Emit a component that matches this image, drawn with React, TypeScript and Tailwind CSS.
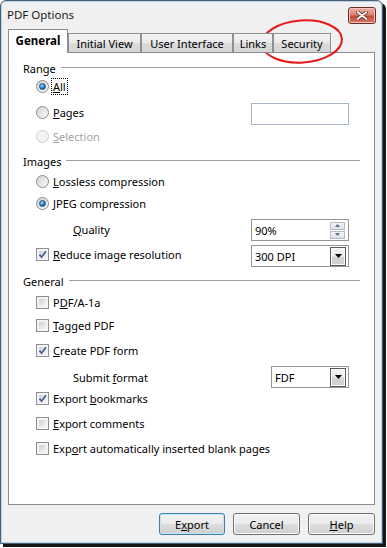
import type { ReactNode } from "react";

const FONT = "font-['Noto_Sans','Liberation_Sans',sans-serif]";

function Radio({ checked, disabled }: { checked?: boolean; disabled?: boolean }) {
  return (
    <span
      className={`size-[13px] shrink-0 rounded-full border flex items-center justify-center ${
        disabled
          ? "border-[#cfcfcf] bg-[#f3f3f3]"
          : "border-[#8a8b8c] bg-[linear-gradient(135deg,#d0d2d5,#fbfbfb)]"
      }`}
    >
      {checked && (
        <span className="size-[7px] rounded-full border border-[#1c4f7c] bg-[radial-gradient(circle_at_35%_30%,#9fd6f7,#1d79bf_60%,#0d4a80)]" />
      )}
    </span>
  );
}

function Check({ checked }: { checked?: boolean }) {
  return (
    <span className="size-[13px] shrink-0 border border-[#8e8f8f] bg-[#f4f4f4] p-[2px]">
      <span className="size-full flex items-center justify-center bg-[linear-gradient(135deg,#cdd0d5,#f6f6f6)] relative">
        {checked && (
          <svg viewBox="0 0 9 9" className="absolute -left-[1px] -top-[1px] size-[9px] overflow-visible">
            <path d="M1.5 4.6 L3.6 7.2 L8 1.2" fill="none" stroke="#4a5f95" strokeWidth="1.7" />
          </svg>
        )}
      </span>
    </span>
  );
}

function Row({ mt, children }: { mt: string; children: ReactNode }) {
  return <div className={`h-[18px] flex items-center ${mt}`}>{children}</div>;
}

function Section({ mt, label }: { mt: string; label: string }) {
  return (
    <Row mt={mt}>
      <span className="text-black">{label}</span>
      <span className="flex-1 h-px bg-[#a0a0a0] ml-[5px] -mt-[1px]" />
    </Row>
  );
}

function Option({ kind, checked, disabled, children }: { kind: "radio" | "check"; checked?: boolean; disabled?: boolean; children: ReactNode }) {
  return (
    <div className="flex items-center gap-[4px] pl-[13px]">
      {kind === "radio" ? <Radio checked={checked} disabled={disabled} /> : <Check checked={checked} />}
      <span className={disabled ? "text-[#a3a3a3]" : "text-black"}>{children}</span>
    </div>
  );
}

function DropBtn() {
  return (
    <span className="w-[16px] h-[19px] border border-[#5a5a5a] bg-[linear-gradient(#f6f6f6,#e6e6e6_50%,#d4d4d4_51%,#cfcfcf)] flex items-center justify-center shadow-[inset_0_0_0_1px_#fafafa]">
      <svg viewBox="0 0 7 4" className="w-[7px] h-[4px]">
        <path d="M0 0 H7 L3.5 4 Z" fill="#000" />
      </svg>
    </span>
  );
}

function Select({ value, w }: { value: string; w: string }) {
  return (
    <div className={`${w} h-[22px] mr-[11px] ml-auto border border-[#959595] bg-white flex items-center justify-between pl-[3px] pr-[2px]`}>
      <span>{value}</span>
      <DropBtn />
    </div>
  );
}

function Button({ children, def }: { children: ReactNode; def?: boolean }) {
  return (
    <div
      className={`h-[22px] rounded-[3px] border flex items-center justify-center bg-[linear-gradient(#f2f2f2,#ebebeb_48%,#dddddd_52%,#cfcfcf)] ${
        def ? "w-[66px] border-[#3c7fb1] shadow-[inset_0_0_0_1px_#c6e6f8]" : "w-[67px] border-[#707070] shadow-[inset_0_0_0_1px_#fbfbfb]"
      }`}
    >
      {children}
    </div>
  );
}

const TAB = "h-[20px] border border-[#8e8f8f] border-b-[#898c95] bg-[linear-gradient(#f3f3f3,#e9e9e9_50%,#dcdcdc_51%,#d6d6d6)] flex items-center justify-center";

export default function App() {
  return (
    <div className={`w-[387px] h-[548px] bg-white relative text-[11px] leading-none ${FONT}`}>
      {/* window */}
      <div className="w-[383px] h-[544px] border border-[#4d5e70] rounded-t-[6px] bg-[#f0f0f0] shadow-[inset_0_0_0_1px_#b6d3ec,3px_3px_0_#161616] flex flex-col px-[7px]">
        {/* title bar */}
        <div className="h-[27px] flex items-center justify-between">
          <span className="text-[#1a1a1a] text-[11.5px] -ml-[1px] mt-[1px]">PDF Options</span>
          <div className="w-[28px] h-[17px] -mr-[1px] mt-[1px] rounded-[3px] border border-[#6b2b24] bg-[linear-gradient(#eeb3a8,#dc8273_45%,#c64a38_55%,#d87764)] flex items-center justify-center shadow-[inset_0_0_0_1px_#f3c7bf]">
            <svg viewBox="0 0 12 9" className="w-[12px] h-[9px]">
              <path d="M1.5 1 L10.5 8 M10.5 1 L1.5 8" stroke="#5a2a26" strokeWidth="3.4" strokeLinecap="round" />
              <path d="M1.5 1 L10.5 8 M10.5 1 L1.5 8" stroke="#ffffff" strokeWidth="1.8" strokeLinecap="round" />
            </svg>
          </div>
        </div>

        {/* tabs */}
        <div className="flex items-end h-[24px] mt-[1px] relative z-10 -mb-[1px]">
          <div className="w-[60px] h-[24px] border border-b-0 border-[#898c95] bg-white flex items-center justify-center font-bold text-[11.5px] pb-[1px]">
            General
          </div>
          <div className={`w-[73px] ${TAB}`}>Initial View</div>
          <div className={`w-[92px] ${TAB}`}>User Interface</div>
          <div className={`w-[40px] ${TAB}`}>Links</div>
          <div className={`w-[58px] ${TAB}`}>Security</div>
        </div>

        {/* tab page */}
        <div className="h-[453px] border border-[#898c95] bg-white px-[14px] pt-[6px] flex flex-col">
          <Section mt="mt-0" label="Range" />
          <Row mt="mt-0">
            <Option kind="radio" checked>
              <span className="outline outline-1 outline-dotted outline-black px-[1px] -mx-[1px]"><u>A</u>ll</span>
            </Option>
          </Row>
          <Row mt="mt-[8px]">
            <Option kind="radio"><u>P</u>ages</Option>
            <div className="w-[98px] h-[22px] ml-auto mr-[11px] mt-[4px] border border-[#a7b4c6] bg-white" />
          </Row>
          <Row mt="mt-[6px]">
            <Option kind="radio" disabled><u>S</u>election</Option>
          </Row>

          <Section mt="mt-[7px]" label="Images" />
          <Row mt="mt-[2px]">
            <Option kind="radio"><u>L</u>ossless compression</Option>
          </Row>
          <Row mt="mt-[4px]">
            <Option kind="radio" checked><u>J</u>PEG compression</Option>
          </Row>
          <Row mt="mt-[8px]">
            <span className="pl-[50px]"><u>Q</u>uality</span>
            <div className="w-[98px] h-[22px] ml-auto mr-[11px] mt-[2px] border border-[#959595] bg-white flex items-center justify-between pl-[3px] pr-[3px]">
              <span>90%</span>
              <div className="flex flex-col gap-px">
                <span className="w-[15px] h-[8px] border border-[#b7bcc4] bg-[linear-gradient(#f4f5f7,#dde1e6)] flex items-center justify-center">
                  <svg viewBox="0 0 5 3" className="w-[5px] h-[3px]"><path d="M0 3 L2.5 0 L5 3 Z" fill="#5a6f98" /></svg>
                </span>
                <span className="w-[15px] h-[8px] border border-[#b7bcc4] bg-[linear-gradient(#f4f5f7,#dde1e6)] flex items-center justify-center">
                  <svg viewBox="0 0 5 3" className="w-[5px] h-[3px]"><path d="M0 0 L5 0 L2.5 3 Z" fill="#5a6f98" /></svg>
                </span>
              </div>
            </div>
          </Row>
          <Row mt="mt-[7px]">
            <Option kind="check" checked><u>R</u>educe image resolution</Option>
            <div className="ml-auto mt-[4px] flex">
              <Select value="300 DPI" w="w-[98px]" />
            </div>
          </Row>

          <Section mt="mt-[9px]" label="General" />
          <Row mt="mt-[3px]">
            <Option kind="check">P<u>D</u>F/A-1a</Option>
          </Row>
          <Row mt="mt-[5px]">
            <Option kind="check"><u>T</u>agged PDF</Option>
          </Row>
          <Row mt="mt-[7px]">
            <Option kind="check" checked><u>C</u>reate PDF form</Option>
          </Row>
          <Row mt="mt-[9px]">
            <span className="pl-[50px]">Submit <u>f</u>ormat</span>
            <div className="ml-auto flex">
              <Select value="FDF" w="w-[78px]" />
            </div>
          </Row>
          <Row mt="mt-[3px]">
            <Option kind="check" checked>Export <u>b</u>ookmarks</Option>
          </Row>
          <Row mt="mt-[7px]">
            <Option kind="check"><u>E</u>xport comments</Option>
          </Row>
          <Row mt="mt-[7px]">
            <Option kind="check">Exp<u>o</u>rt automatically inserted blank pages</Option>
          </Row>
        </div>

        {/* buttons */}
        <div className="flex justify-end gap-[8px] mt-[8px]">
          <Button def>E<u>x</u>port</Button>
          <Button>Cancel</Button>
          <Button><u>H</u>elp</Button>
        </div>
      </div>

      {/* red annotation circle */}
      <svg className="absolute left-[258px] top-[16px] w-[90px] h-[52px] pointer-events-none" viewBox="0 0 90 52">
        <ellipse cx="44" cy="25.5" rx="40" ry="21" transform="rotate(-4 44 25.5)" fill="none" stroke="#e61919" strokeWidth="2" />
      </svg>
    </div>
  );
}
